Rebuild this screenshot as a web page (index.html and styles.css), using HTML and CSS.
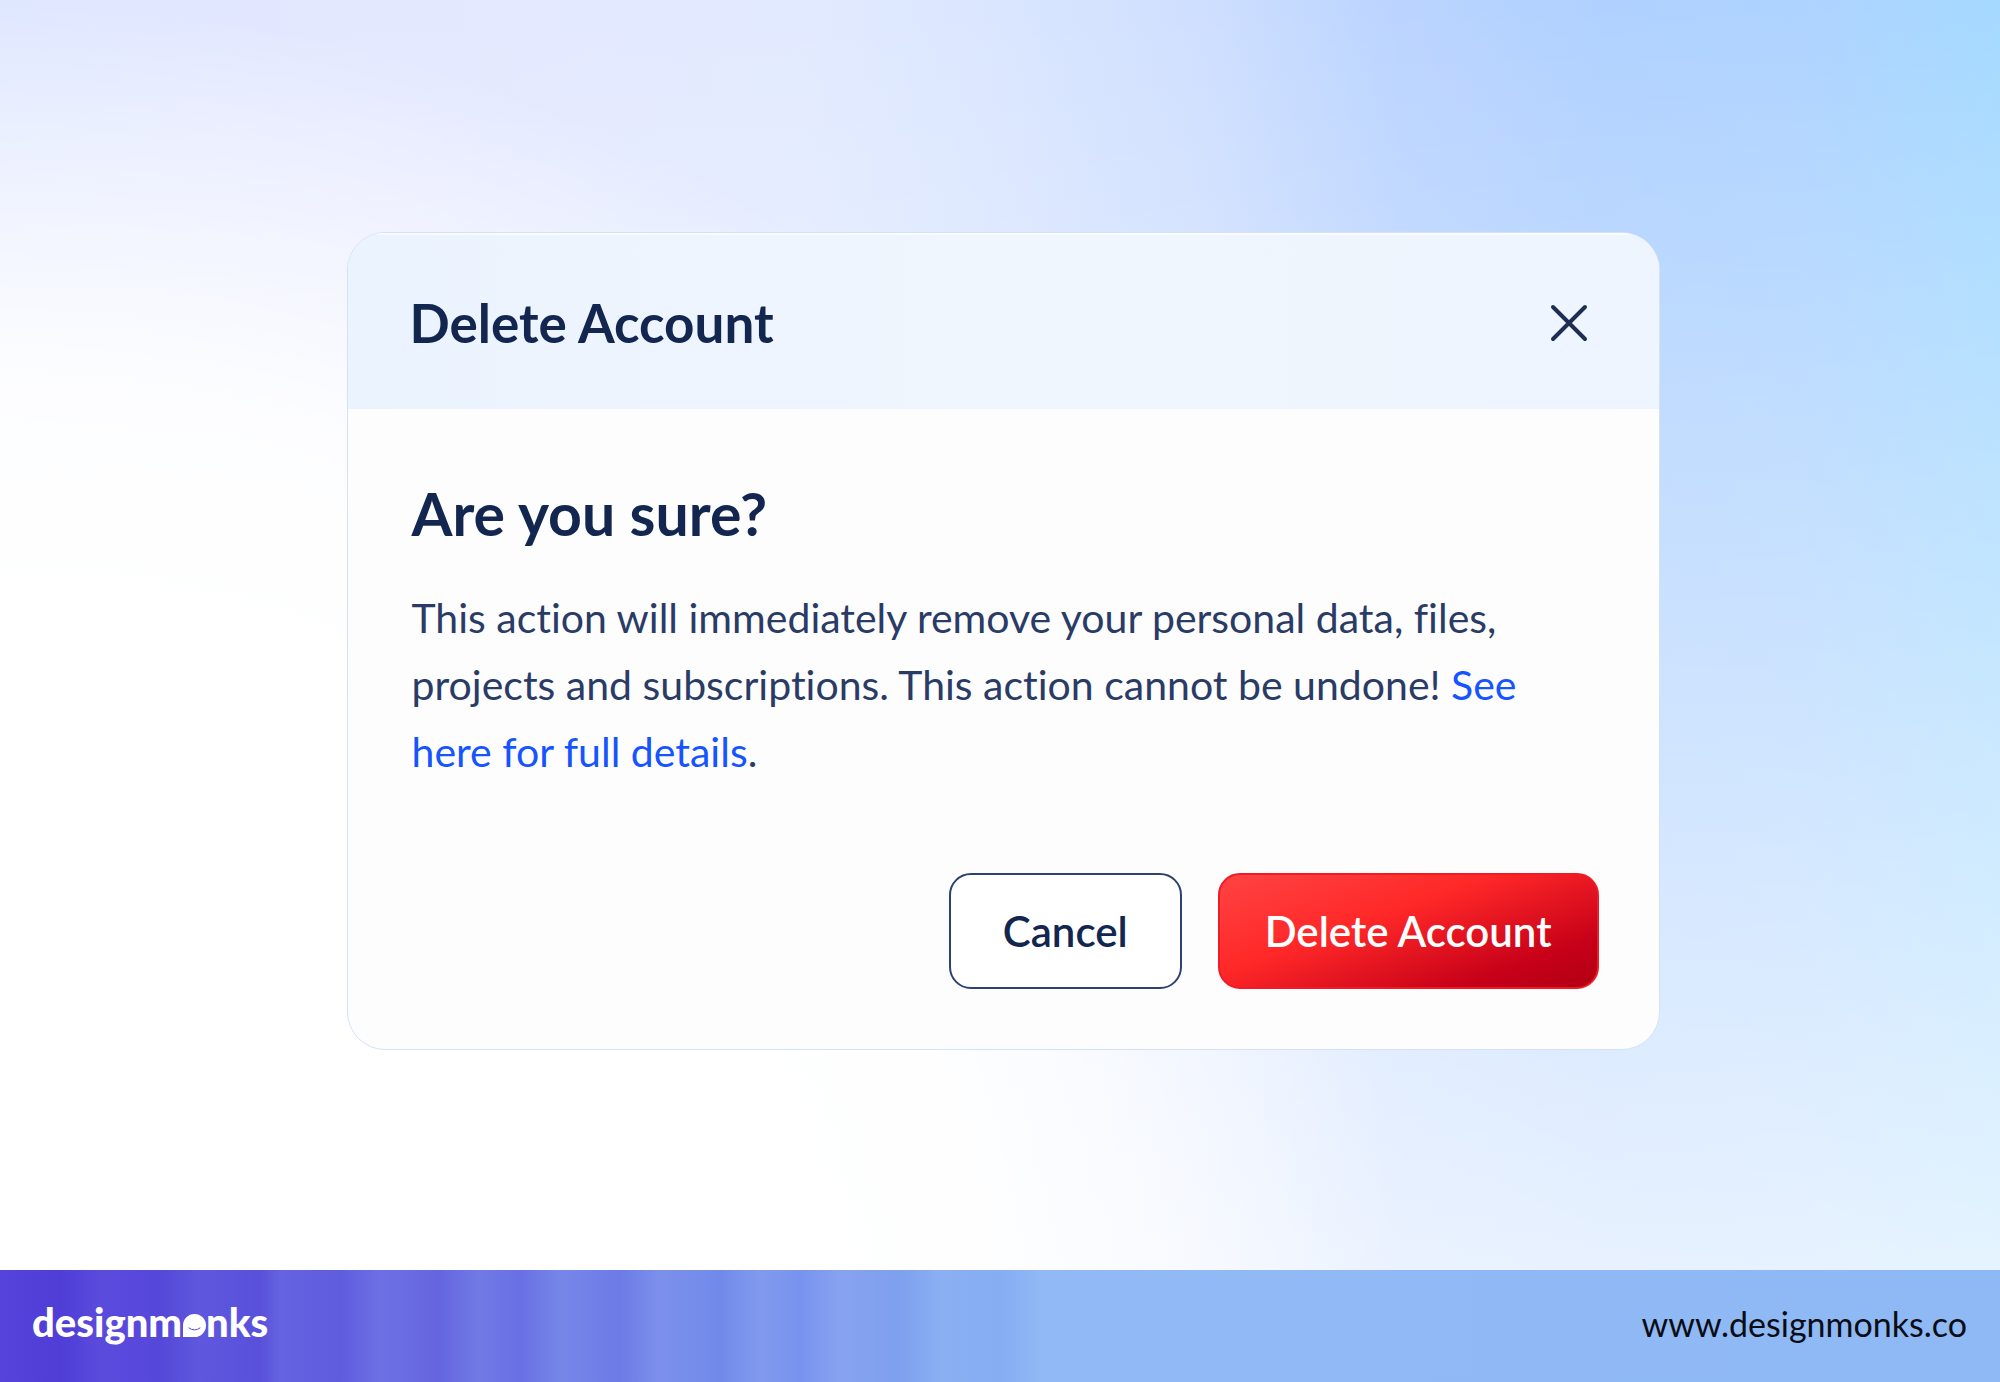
FILE: index.html
```html
<!DOCTYPE html>
<html lang="en">
<head>
	<meta charset="utf-8">
	<meta name="viewport" content="width=device-width, initial-scale=1.0">
	<title>Delete Account</title>
	<link rel="stylesheet" href="styles.css">
</head>
<body>

<main id="stage">
	<section class="dialog" role="dialog" aria-labelledby="dialog-title">
		<header class="dialog-head">
			<h1 id="dialog-title">Delete Account</h1>
			<button type="button" class="close" aria-label="Close">
				<svg viewBox="0 0 40 40" width="40" height="40"><path d="M4 4L36 36M36 4L4 36"/></svg>
			</button>
		</header>
		<div class="dialog-body">
			<h2>Are you sure?</h2>
			<p>This action will immediately remove your personal data, files, projects and subscriptions. This action cannot be undone! <a href="#">See here for full details</a>.</p>
			<div class="actions">
				<button type="button" class="btn">Cancel</button>
				<button type="button" class="btn danger">Delete Account</button>
			</div>
		</div>
	</section>
</main>

<footer id="footer">
	<a href="#" class="logo" aria-label="designmonks"><span>designm</span><svg viewBox="0 0 24 23" width="24" height="23"><path class="face" d="M1 23V11.5A11.500 11.5 0 1 1 12.500 23Z"/><path class="smile" d="M7 14Q12.500 18 18 14"/></svg><span>nks</span></a>
	<a href="#" class="site">www.designmonks.co</a>
</footer>

</body>
</html>
```
FILE: styles.css
```css
html,body{
	height:100%;
}
body{
	margin:0; display:flex; flex-direction:column;
	font-family:Lato,"Liberation Sans",sans-serif; color:#12264f;
	font-variant-ligatures:none;
}
h1,h2,p{
	margin:0;
}
a{
	text-decoration:none;
}

/*background*/
#stage{
	flex:1; display:flex; align-items:center; justify-content:center;
	box-sizing:border-box; padding:32px 20px 20px 26px;
	background:
		radial-gradient(ellipse 70% 100% at 0% 100%, #fff 50%, rgba(255,255,255,0.9) 70%, rgba(255,255,255,0) 100%),
		linear-gradient(180deg, rgba(255,255,255,0), rgba(255,255,255,0.7)),
		linear-gradient(90deg, #dfe7ff, #e4e8ff 20%, #e2eaff 40%, #dae6ff 50%, #cfdfff 60%, #bad4ff 70%, #b0d1ff 80%, #aed3ff 90%, #a5d9ff 100%);
}

/*dialog*/
.dialog{
	width:100%; max-width:1311px;
	border:1px solid #d3e2f8; border-radius:38px;
	background:#fdfdfe; overflow:hidden;
}
.dialog-head{
	display:flex; align-items:center; justify-content:space-between;
	padding:58px 70px 54px 62px;
	background:linear-gradient(90deg, #ebf3fe, #f0f6fe 50%, #eff5fe);
	box-shadow:inset 0 2px 0 #fafcff;
}
.dialog-head h1{
	font-size:53px; line-height:64px; font-weight:700;
}
.close{
	padding:0; border:0; background:none; line-height:0; cursor:pointer;
}
.close path{
	fill:none; stroke:#1d2d56; stroke-width:4; stroke-linecap:round;
}
.dialog-body{
	padding:71px 60px 60px 64px;
}
.dialog-body h2{
	margin-bottom:36px;
	font-size:59px; line-height:68px; font-weight:700;
}
.dialog-body p{
	font-size:41px; line-height:67px; color:#2a3b66;
}
.dialog-body a{
	color:#1554ff;
}
.actions{
	display:flex; justify-content:flex-end; gap:36px;
	margin-top:88px;
}
.btn{
	height:116px; padding:0 52px;
	border:2px solid #2d4270; border-radius:22px;
	background:#fff; color:#12264f;
	font-family:inherit; font-size:42px; font-weight:600; cursor:pointer;
}
.danger{
	padding:0 45px; border-color:#ee1c26;
	background:linear-gradient(160deg, #ff4444 0%, #ff2828 40%, #c60018 80%, #b00014 100%) border-box;
	color:#fff;
}

/*footer*/
#footer{
	display:flex; align-items:baseline; justify-content:space-between;
	box-sizing:border-box; height:112px; padding:27px 33px 0 32px;
	background:linear-gradient(90deg,
		#5643dc 0%, #4f3dd6 3%, #5a4bdd 5%, #5849dc 7%, #5448d8 8%,
		#5f58de 10%, #5850da 13%, #6563e1 14%, #5f5cde 17%,
		#6c70e4 19%, #6566df 22%, #707ae5 24%, #6870e4 26%,
		#7686e8 28%, #6c7be6 31%, #7c90eb 33%, #718aea 36%,
		#819aee 38%, #7893ef 40%, #87a2f0 42%, #7ea0ef 45%,
		#8aaff2 47%, #86acf2 50%, #90b9f5 52%, #8fb9f5 100%);
}
.logo{
	display:flex; align-items:baseline;
	font-size:40px; line-height:50px; font-weight:900; color:#fff;
}
.logo .face{
	fill:#fff;
}
.logo .smile{
	fill:none; stroke:#5a4bdd; stroke-width:1; stroke-linecap:round;
}
.site{
	font-size:34px; color:#0a0d14;
}
```
